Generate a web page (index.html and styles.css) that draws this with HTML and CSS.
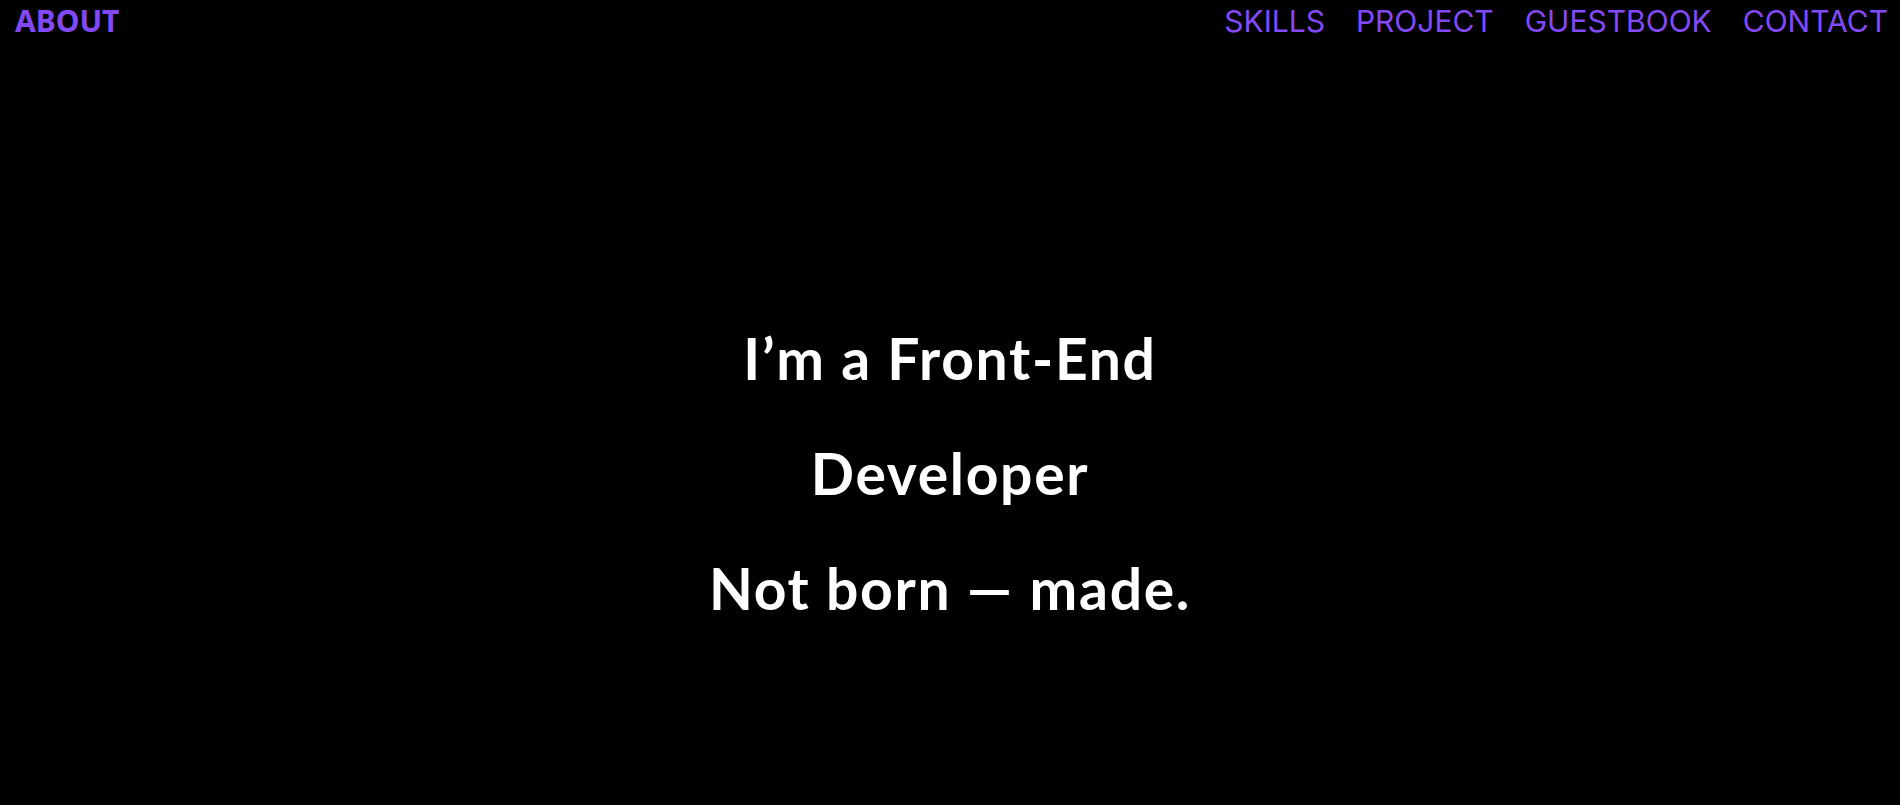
FILE: index.html
```html
<!DOCTYPE html>
<html lang="en">
<head>
<meta charset="utf-8">
<title>Portfolio</title>
<link rel="stylesheet" href="styles.css">
</head>
<body>
<header class="nav">
  <a class="nav-logo" href="#">ABOUT</a>
  <nav class="nav-links">
    <a class="nav-link" href="#">SKILLS</a>
    <a class="nav-link" href="#">PROJECT</a>
    <a class="nav-link" href="#">GUESTBOOK</a>
    <a class="nav-link" href="#">CONTACT</a>
  </nav>
</header>
<main class="hero">
  <h1 class="hero-title">
    <span class="hero-line">I’m a Front-End</span>
    <span class="hero-line">Developer</span>
    <span class="hero-line">Not born — made.</span>
  </h1>
</main>
</body>
</html>
```
FILE: styles.css
```css
html, body {
  margin: 0;
  padding: 0;
  background: #000;
  height: 100%;
}
body {
  font-family: "Noto Sans", sans-serif;
  color: #fff;
  overflow: hidden;
}
.nav {
  display: flex;
  justify-content: space-between;
  align-items: center;
  height: 41px;
  padding: 0 12px 0 15px;
}
.nav-logo {
  font-family: "Noto Sans", sans-serif;
  font-weight: 700;
  font-size: 30px;
  color: #8449f6;
  text-decoration: none;
  line-height: 1;
}
.nav-links {
  display: flex;
  gap: 31px;
}
.nav-link {
  font-family: Inter, sans-serif;
  font-weight: 400;
  font-size: 30px;
  color: #8449f6;
  text-decoration: none;
  line-height: 1;
}
.hero {
  display: flex;
  justify-content: center;
  padding-top: 260px;
}
.hero-title {
  margin: 0;
  display: flex;
  flex-direction: column;
  align-items: center;
  font-family: Lato, sans-serif;
  font-weight: 700;
  font-size: 57px;
  letter-spacing: 1.7px;
  line-height: 115px;
}
.hero-line {
  display: block;
}
```
